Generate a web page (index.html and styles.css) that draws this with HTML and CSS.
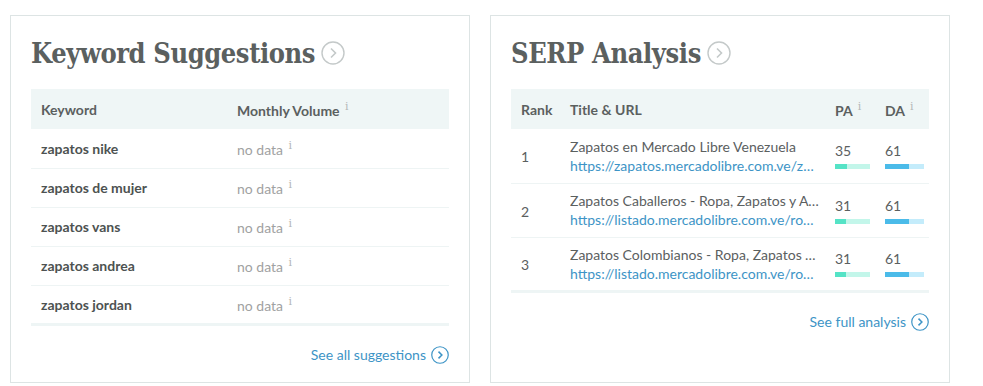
FILE: index.html
```html
<!DOCTYPE html>
<html lang="en">
<head>
    <meta charset="UTF-8">
    <meta name="viewport" content="width=device-width, initial-scale=1.0">
    <title>Keyword Overview</title>
    <link rel="stylesheet" href="styles.css">
</head>
<body>
    <div class="page">
        <div class="card">
            <h2 class="title">Keyword Suggestions
                <svg class="go" viewBox="0 0 24 24"><circle cx="12" cy="12" r="11"/><path d="M10 7.5l4.5 4.5-4.5 4.5"/></svg>
            </h2>
            <table class="grid kw">
                <thead>
                    <tr><th class="c-kw">Keyword</th><th>Monthly Volume <sup>i</sup></th></tr>
                </thead>
                <tbody>
                    <tr><td class="c-kw">zapatos nike</td><td class="nodata">no data <sup>i</sup></td></tr>
                    <tr><td class="c-kw">zapatos de mujer</td><td class="nodata">no data <sup>i</sup></td></tr>
                    <tr><td class="c-kw">zapatos vans</td><td class="nodata">no data <sup>i</sup></td></tr>
                    <tr><td class="c-kw">zapatos andrea</td><td class="nodata">no data <sup>i</sup></td></tr>
                    <tr><td class="c-kw">zapatos jordan</td><td class="nodata">no data <sup>i</sup></td></tr>
                </tbody>
            </table>
            <div class="more">
                <a href="#">See all suggestions
                    <svg class="go small" viewBox="0 0 24 24"><circle cx="12" cy="12" r="11"/><path d="M10 7.5l4.5 4.5-4.5 4.5"/></svg>
                </a>
            </div>
        </div>

        <div class="card">
            <h2 class="title">SERP Analysis
                <svg class="go" viewBox="0 0 24 24"><circle cx="12" cy="12" r="11"/><path d="M10 7.5l4.5 4.5-4.5 4.5"/></svg>
            </h2>
            <table class="grid serp">
                <colgroup>
                    <col class="w-rank"><col class="w-title"><col class="w-pa"><col class="w-da">
                </colgroup>
                <thead>
                    <tr><th>Rank</th><th>Title &amp; URL</th><th>PA <sup>i</sup></th><th>DA <sup>i</sup></th></tr>
                </thead>
                <tbody>
                    <tr>
                        <td class="rank">1</td>
                        <td class="page-cell">
                            <div class="pg-title">Zapatos en Mercado Libre Venezuela</div>
                            <a class="pg-url" href="#">https://zapatos.mercadolibre.com.ve/zapatos-nike</a>
                        </td>
                        <td><div class="num">35</div><div class="bar pa"><span style="width:35%"></span></div></td>
                        <td><div class="num">61</div><div class="bar da"><span style="width:61%"></span></div></td>
                    </tr>
                    <tr>
                        <td class="rank">2</td>
                        <td class="page-cell">
                            <div class="pg-title">Zapatos Caballeros - Ropa, Zapatos y Accesorios</div>
                            <a class="pg-url" href="#">https://listado.mercadolibre.com.ve/ropa-zapatos</a>
                        </td>
                        <td><div class="num">31</div><div class="bar pa"><span style="width:31%"></span></div></td>
                        <td><div class="num">61</div><div class="bar da"><span style="width:61%"></span></div></td>
                    </tr>
                    <tr>
                        <td class="rank">3</td>
                        <td class="page-cell">
                            <div class="pg-title">Zapatos Colombianos - Ropa, Zapatos y Accesorios</div>
                            <a class="pg-url" href="#">https://listado.mercadolibre.com.ve/ropa-zapatos-colombianos</a>
                        </td>
                        <td><div class="num">31</div><div class="bar pa"><span style="width:31%"></span></div></td>
                        <td><div class="num">61</div><div class="bar da"><span style="width:61%"></span></div></td>
                    </tr>
                </tbody>
            </table>
            <div class="more">
                <a href="#">See full analysis
                    <svg class="go small" viewBox="0 0 24 24"><circle cx="12" cy="12" r="11"/><path d="M10 7.5l4.5 4.5-4.5 4.5"/></svg>
                </a>
            </div>
        </div>
    </div>
</body>
</html>
```

FILE: styles.css
```css
*{
    padding: 0;
    margin: 0;
    box-sizing: border-box;
}
body{
    background: #fff;
    font-family: Lato, "Open Sans", sans-serif;
    font-size: 14px;
    color: #5b605f;
}
.page{
    display: flex;
    gap: 20px;
    padding: 15px 10px;
}
.card{
    width: 460px;
    height: 368px;
    border: 1px solid #dde4e4;
    padding: 20px 20px;
}
.title{
    display: flex;
    align-items: center;
    gap: 6px;
    height: 34px;
    font-family: "DejaVu Serif Condensed", "DejaVu Serif", serif;
    font-weight: 700;
    font-size: 27px;
    color: #5b605f;
    letter-spacing: -0.4px;
}
.go{
    flex: none;
    width: 24px;
    height: 24px;
    fill: none;
    stroke: #c4c9c9;
    stroke-width: 1.4;
}
.go path{
    stroke-width: 1.6;
}
.go.small{
    width: 18px;
    height: 18px;
    stroke: #3d94c6;
    stroke-width: 1.6;
    margin-left: 5px;
}
.go.small path{
    stroke-width: 2;
}
.grid{
    width: 100%;
    margin-top: 19px;
    border-collapse: collapse;
    table-layout: fixed;
}
.grid th{
    height: 40px;
    background: #eff6f6;
    text-align: left;
    font-weight: 700;
    color: #5b605f;
    padding: 0 10px;
    vertical-align: middle;
}
.grid td{
    padding: 0 10px;
    vertical-align: middle;
    border-bottom: 1px solid #eef4f4;
}
.grid tbody tr:last-child td{
    border-bottom: 3px solid #eef5f5;
}
sup{
    font-family: "DejaVu Serif", serif;
    font-size: 11px;
    font-weight: 400;
    color: #b3b6b6;
    margin-left: 2px;
}
.kw td{
    height: 39px;
}
.kw .c-kw{
    width: 196px;
}
.kw td.c-kw{
    font-weight: 700;
    color: #4d5251;
}
.nodata{
    color: #9fa2a2;
    padding-top: 3px;
}
.w-rank{ width: 49px; }
.w-title{ width: 265px; }
.w-pa{ width: 50px; }
.w-da{ width: 54px; }
.serp td{
    height: 54px;
    color: #5b605f;
}
.serp .rank{
    padding-top: 2px;
}
.serp .page-cell{
    padding-right: 5px;
    line-height: 19px;
}
.pg-title, .pg-url{
    display: block;
    white-space: nowrap;
    overflow: hidden;
    text-overflow: ellipsis;
}
.pg-url{
    color: #3d94c6;
    text-decoration: none;
}
.num{
    line-height: 18px;
}
.bar{
    height: 5px;
    margin-top: 4px;
    display: flex;
}
.bar span{
    display: block;
    height: 100%;
}
.bar.pa{
    width: 35px;
    background: #c3f6ea;
}
.bar.pa span{
    background: #55e3c6;
}
.bar.da{
    width: 39px;
    background: #c4ecfb;
}
.bar.da span{
    background: #4bbbe9;
}
.more{
    display: flex;
    justify-content: flex-end;
    margin-top: 20px;
}
.more a{
    display: flex;
    align-items: center;
    color: #3d94c6;
    text-decoration: none;
    font-size: 14px;
}
```
